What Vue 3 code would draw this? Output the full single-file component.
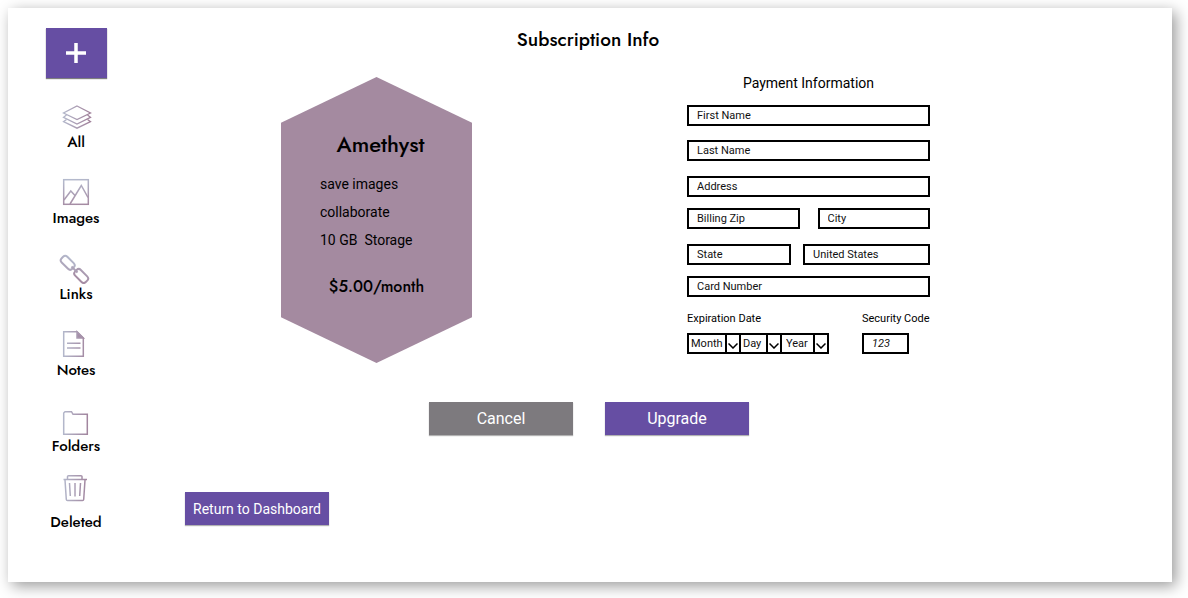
<script setup>
import { ref } from 'vue'

const sections = ['All', 'Images', 'Links', 'Notes', 'Folders', 'Deleted']
const features = ['save images', 'collaborate', '10 GB\u00a0 Storage']
const month = ref('Month')
const day = ref('Day')
const year = ref('Year')
</script>

<template>
  <div class="card">
    <nav class="sidebar" aria-label="Library">
      <button class="add" type="button" aria-label="Add">
        <svg width="20" height="20" viewBox="0 0 20 20"><path d="M10 0V20M0 10H20" stroke="#fff" stroke-width="3.500" /></svg>
      </button>
      <a v-for="name in sections" :key="name" class="section" href="#">
        <svg width="40" height="40" viewBox="0 0 40 40" fill="none" aria-hidden="true">
          <defs>
            <linearGradient :id="'across-' + name" gradientUnits="userSpaceOnUse" x1="6" y1="20" x2="34" y2="20">
              <stop offset="0" stop-color="#b4bacd" />
              <stop offset="1" stop-color="#a0809a" />
            </linearGradient>
            <linearGradient :id="'down-' + name" gradientUnits="userSpaceOnUse" x1="18" y1="11" x2="22" y2="38">
              <stop offset="0" stop-color="#b4bacd" />
              <stop offset="1" stop-color="#a58aa2" />
            </linearGradient>
          </defs>
          <g v-if="name === 'All'" :stroke="`url(#across-${name})`" stroke-width="1.3">
            <path d="M21 14L34.500 21L21 27.500L7.500 21Z" />
            <path d="M10.500 23L7.500 25.300L21 32L34.500 25.300L31.500 23" />
            <path d="M10.500 27.500L7.500 29.700L21 36.200L34.500 29.700L31.500 27.500" />
          </g>
          <g v-else-if="name === 'Images'" :stroke="`url(#down-${name})`" stroke-width="1.5">
            <rect x="7.700" y="11.700" width="24.600" height="24.600" />
            <path d="M8 32L14.800 23L19 27.500M14 36L25.300 17.500L32 29.500" />
          </g>
          <g v-else-if="name === 'Links'" :stroke="`url(#down-${name})`" stroke-width="2">
            <rect x="4.200" y="14.800" width="15" height="8" rx="3" transform="rotate(45 11.700 18.800)" />
            <rect x="17.700" y="28" width="15" height="8" rx="3" transform="rotate(45 25.200 32)" />
            <path d="M15.500 22.500L21.500 28.500" />
          </g>
          <g v-else-if="name === 'Notes'" :stroke="`url(#across-${name})`" stroke-width="1.5">
            <path d="M7.700 11.700H21L27.300 18V36.300H7.700Z" />
            <path d="M21 11.700V18H27.300Z" fill="#a58fa8" />
            <path d="M11 23.300H24.500M11 28H24.500" />
          </g>
          <g v-else-if="name === 'Folders'" :stroke="`url(#across-${name})`" stroke-width="1.5">
            <path d="M7.700 38.300V17L9 15.700H15.500L17 18.300H31.300V38.300Z" />
          </g>
          <g v-else :stroke="`url(#across-${name})`" stroke-width="1.5">
            <path d="M7.500 7.500H31M11.500 7V4.500Q11.500 3.700 12.500 3.700H25Q26 3.700 26 4.500V7" />
            <path d="M9 8L10.300 27.500Q10.400 28.500 11.500 28.500H26.500Q27.600 28.500 27.700 27.500L29 8" />
            <path d="M13.500 11L14.300 24M19 11V24.500M24.500 11L23.700 24" />
          </g>
        </svg>
        <span>{{ name }}</span>
      </a>
    </nav>

    <main class="content">
      <h1>Subscription Info</h1>
      <div class="columns">
        <section class="plan">
          <h2>Amethyst</h2>
          <ul>
            <li v-for="feature in features" :key="feature">{{ feature }}</li>
          </ul>
          <p class="price">$5.00/month</p>
        </section>

        <form id="payment" class="payment" @submit.prevent>
          <h3>Payment Information</h3>
          <input class="field wide" type="text" placeholder="First Name" aria-label="First Name" />
          <input class="field wide" type="text" placeholder="Last Name" aria-label="Last Name" />
          <div class="group">
            <input class="field" type="text" placeholder="Address" aria-label="Address" />
            <div class="pair halves">
              <input class="field" type="text" placeholder="Billing Zip" aria-label="Billing Zip" />
              <input class="field" type="text" placeholder="City" aria-label="City" />
            </div>
          </div>
          <div class="group">
            <div class="pair region">
              <input class="field" type="text" placeholder="State" aria-label="State" />
              <input class="field" type="text" placeholder="United States" aria-label="Country" />
            </div>
            <input class="field" type="text" placeholder="Card Number" aria-label="Card Number" />
          </div>
          <div class="bottom">
            <fieldset>
              <legend>Expiration Date</legend>
              <div class="date">
                <div class="part month">
                  <select v-model="month" aria-label="Month"><option>Month</option></select>
                  <span class="arrow"><svg width="10" height="6" viewBox="0 0 10 6"><path d="M0.500 0.500L5 5L9.500 0.500" /></svg></span>
                </div>
                <div class="part day">
                  <select v-model="day" aria-label="Day"><option>Day</option></select>
                  <span class="arrow"><svg width="10" height="6" viewBox="0 0 10 6"><path d="M0.500 0.500L5 5L9.500 0.500" /></svg></span>
                </div>
                <div class="part year">
                  <select v-model="year" aria-label="Year"><option>Year</option></select>
                  <span class="arrow"><svg width="10" height="6" viewBox="0 0 10 6"><path d="M0.500 0.500L5 5L9.500 0.500" /></svg></span>
                </div>
              </div>
            </fieldset>
            <div class="security">
              <label for="code">Security Code</label>
              <input id="code" class="field code" type="text" placeholder="123" />
            </div>
          </div>
        </form>
      </div>

      <div class="actions">
        <button class="btn cancel" type="button">Cancel</button>
        <button class="btn" type="submit" form="payment">Upgrade</button>
      </div>
      <button class="btn return" type="button">Return to Dashboard</button>
    </main>
  </div>
</template>

<style>
body {
  background: #fff;
}
</style>

<style scoped>
* {
  box-sizing: border-box;
}
.card {
  display: grid;
  grid-template-columns: 136px 1fr;
  margin: 8px 16px 16px 8px;
  padding: 20px 0 50px;
  background: #fff;
  box-shadow: 4px 4px 14px rgba(0, 0, 0, 0.4);
  color: #000;
  font-family: Roboto, sans-serif;
}
h1, h2, h3, p, ul, fieldset, legend {
  margin: 0;
  padding: 0;
  border: 0;
}
button, input, select {
  font-family: inherit;
}
.sidebar {
  display: flex;
  flex-direction: column;
  align-items: center;
  gap: 16px;
}
.add {
  display: grid;
  place-items: center;
  width: 61px;
  height: 50px;
  margin-bottom: -2px;
  padding: 0;
  border: 0;
  background: #664ea3;
  box-shadow: 0 1px 1px rgba(0, 0, 0, 0.5);
}
.section {
  display: flex;
  flex-direction: column;
  align-items: center;
  color: #000;
  font: 500 15px/20px Futura, Jost, Lato, sans-serif;
  text-decoration: none;
}
.content {
  padding-right: 140px;
}
h1 {
  font: 500 19px/24px Futura, Jost, Lato, sans-serif;
  text-align: center;
}
.columns {
  display: flex;
  justify-content: center;
  align-items: flex-start;
  gap: 215px;
  padding: 22px 0 0 35px;
}
.plan {
  width: 191px;
  height: 286px;
  margin-top: 3px;
  padding-top: 51px;
  background: #a48aa0;
  clip-path: polygon(50% 0, 100% 16%, 100% 84%, 50% 100%, 0 84%, 0 16%);
}
h2 {
  padding-left: 8px;
  font: 500 22px/32px Futura, Jost, Lato, sans-serif;
  text-align: center;
}
ul {
  padding: 10px 0 0 39px;
  list-style: none;
  font-size: 14px;
  line-height: 28px;
}
.price {
  padding-top: 21px;
  font: 500 16px/24px Futura, Jost, Lato, sans-serif;
  text-align: center;
}
.payment {
  width: 243px;
  font-size: 11px;
}
h3 {
  margin-bottom: 13px;
  font-size: 14px;
  font-weight: 400;
  line-height: 18px;
  text-align: center;
}
.field {
  display: block;
  width: 100%;
  min-width: 0;
  height: 21px;
  padding: 0 8px;
  border: 2px solid #000;
  border-radius: 0;
  background: #fff;
  font-size: 11px;
}
.field::placeholder {
  color: #111;
  opacity: 1;
}
.wide {
  margin-bottom: 14px;
}
.group {
  display: grid;
  gap: 11px;
  margin: 15px 0;
}
.pair {
  display: grid;
}
.halves {
  grid-template-columns: 1fr 1fr;
  gap: 18px;
}
.region {
  grid-template-columns: 104px 1fr;
  gap: 12px;
}
.bottom {
  display: flex;
  justify-content: space-between;
}
legend, label {
  display: block;
  margin-bottom: 7px;
  line-height: 14px;
}
.date {
  display: flex;
  width: 142px;
  height: 21px;
  border: 2px solid #000;
}
.part {
  position: relative;
}
.month {
  width: 50px;
}
.day {
  width: 41px;
}
.year {
  width: 47px;
}
.part + .part {
  border-left: 2px solid #000;
}
select {
  display: block;
  width: 100%;
  height: 17px;
  padding: 0 0 0 2px;
  border: 0;
  background: #fff;
  color: #111;
  font-size: 11px;
  appearance: none;
}
.year select {
  padding-left: 4px;
}
.arrow {
  position: absolute;
  top: 0;
  right: 0;
  display: grid;
  place-items: center;
  width: 14px;
  height: 17px;
  padding-top: 4px;
  border-left: 2px solid #000;
  pointer-events: none;
}
.arrow path {
  fill: none;
  stroke: #000;
  stroke-width: 1.5;
}
.security {
  width: 68px;
}
.code {
  width: 47px;
  font-style: italic;
}
.actions {
  display: flex;
  justify-content: center;
  gap: 32px;
  padding: 39px 0 57px 2px;
}
.btn {
  display: block;
  width: 144px;
  height: 33px;
  padding: 0;
  border: 0;
  background: #664ea3;
  box-shadow: 0 1px 1px rgba(0, 0, 0, 0.3);
  color: #fff;
  font-size: 16px;
}
.cancel {
  background: #7d7a7e;
}
.return {
  margin-left: 41px;
  font-size: 14px;
}
</style>
